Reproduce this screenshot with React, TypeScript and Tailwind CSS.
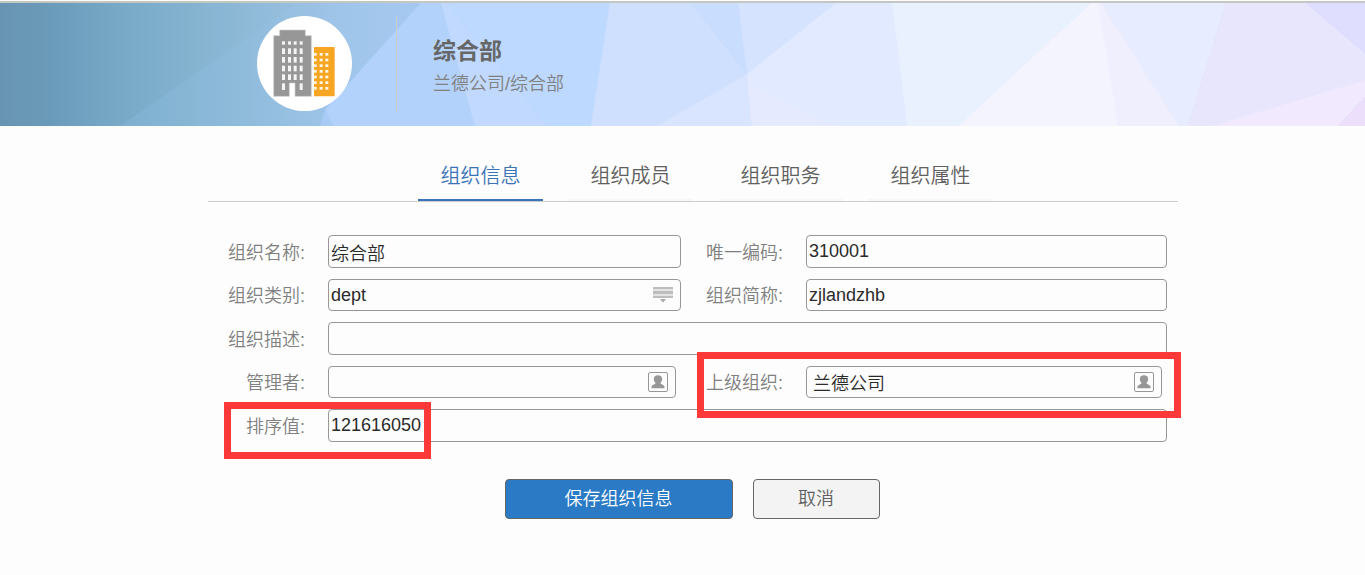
import React, { useState } from "react";

const FACETS: [string, string][] = [
  ["421,0 441,0 475,123 333,123 325,107 352,77", "#b2d2fb"],
  ["325,107 333,123 320,123", "#a8cbf5"],
  ["441,0 447,0 548,123 475,123", "#c1d9ff"],
  ["447,0 610,0 591,123 548,123", "#bdd9ff"],
  ["610,0 692,0 747,71 657,123 591,123", "#cfe0ff"],
  ["692,0 738,0 747,71", "#c9ddff"],
  ["738,0 836,0 747,71", "#d5e3ff"],
  ["657,123 747,71 752,123", "#d9e4fe"],
  ["747,71 836,0 892,0 907,123 752,123", "#e2eaff"],
  ["748,80 835,123 752,123", "#e6eafe"],
  ["892,0 1091,0 958,123 907,123", "#e9f1ff"],
  ["1091,0 1099,0 1117,112 1117,123 958,123", "#f4f4ff"],
  ["1098,0 1102,0 1180,123 1117,123 1117,112", "#f0effe"],
  ["1101,0 1226,0 1188,123 1179,123", "#e8ecff"],
  ["1226,0 1306,0 1365,50 1365,77 1212,123 1188,123", "#e8e6fd"],
  ["1306,0 1365,0 1365,50", "#e0defe"],
  ["1365,77 1365,94 1338,123 1212,123", "#f1eafe"],
  ["1365,94 1365,123 1338,123", "#ecdffb"],
];

function BannerBackdrop() {
  return (
    <svg
      className="absolute inset-0 h-full w-full"
      viewBox="0 0 1365 123"
      preserveAspectRatio="none"
      aria-hidden="true"
    >
      <defs>
        <linearGradient id="sea" gradientUnits="userSpaceOnUse" x1="0" y1="0" x2="430" y2="0">
          <stop offset="0" stopColor="#6794b2" />
          <stop offset="0.12" stopColor="#6b9bba" />
          <stop offset="0.3" stopColor="#79abc9" />
          <stop offset="0.45" stopColor="#84b3d0" />
          <stop offset="0.65" stopColor="#94bddc" />
          <stop offset="0.8" stopColor="#a0c5ea" />
          <stop offset="1" stopColor="#a6c9f1" />
        </linearGradient>
      </defs>
      <rect width="1365" height="123" fill="url(#sea)" />
      <polygon points="297,0 310,60 325,107 320,123 120,123" fill="#9cc8f0" fillOpacity="0.2" />
      {FACETS.map(([points, fill]) => (
        <polygon key={points} points={points} fill={fill} stroke={fill} strokeWidth="0.5" />
      ))}
    </svg>
  );
}

function BuildingLogo() {
  const greyCols = [96, 114, 131, 149];
  const greyRows = [121, 147, 173, 199];
  const orangeCols = [191, 209, 226];
  const orangeRows = [135, 152, 169, 186, 203, 220, 237];
  return (
    <svg className="h-full w-full" viewBox="21 24 285 285" aria-hidden="true">
      <path d="M71 83H89V66H166V83H184V265H135V225H118V265H71z" fill="#979797" stroke="#cfcfcf" strokeWidth="2" />
      {greyCols.map((x) => (
        <rect key={x} x={x} y="100" width="9" height="10" fill="#f4f4f4" />
      ))}
      {greyRows.map((y) =>
        greyCols.map((x) => <rect key={`${x}-${y}`} x={x} y={y} width="9" height="17" fill="#f4f4f4" />),
      )}
      <rect x="96" y="226" width="9" height="20" fill="#f4f4f4" />
      <rect x="149" y="226" width="9" height="20" fill="#f4f4f4" />
      <path d="M192 117H254V265H192z" fill="#f6a623" />
      {orangeRows.map((y) =>
        orangeCols.map((x) => <rect key={`${x}-${y}`} x={x} y={y} width="9" height="8" fill="#fff6e6" />),
      )}
    </svg>
  );
}

function PersonIcon() {
  return (
    <svg className="h-5 w-5" viewBox="0 0 20 20" aria-hidden="true">
      <rect x="0.5" y="0.5" width="19" height="19" rx="1.5" fill="#fdfdfd" stroke="#979797" />
      <path
        d="M10 3.200c2.500 0 4.200 1.600 4.200 3.900 0 1.800-.7 3-1.700 3.800v.6l3 1.700c.6.400 1 1 1 1.800v1.300H3.500V15c0-.8.4-1.400 1-1.800l3-1.700v-.6c-1-.8-1.700-2-1.700-3.800 0-2.300 1.700-3.900 4.200-3.900z"
        fill="#979797"
      />
    </svg>
  );
}

function MenuIcon() {
  return (
    <svg className="h-4 w-5" viewBox="0 0 20 16" aria-hidden="true">
      <path d="M0 0h20v11H0z" fill="#e4e4e4" />
      <path d="M0 0h20v2H0zM0 4h20v3H0zM0 9h20v2H0z" fill="#bdbdbd" />
      <path d="M7 12h6l-3 3.500z" fill="#a8a8a8" />
    </svg>
  );
}

const TABS = ["组织信息", "组织成员", "组织职务", "组织属性"];

const LABEL = "self-center whitespace-nowrap pt-[2px] text-right text-lg leading-6 text-[#808080]";
const FIELD =
  "block h-full w-full min-w-0 appearance-none rounded-[4px] border border-[#979797] bg-[#fdfdfd] px-[2px] text-lg leading-6 text-[#2b2b2b] outline-none";

function PersonField({ id, value, inset }: { id: string; value: string; inset: string }) {
  return (
    <div className="relative mr-[5px]">
      <input id={id} defaultValue={value} className={`${FIELD} ${inset}`} />
      <button type="button" aria-label="选择" className="absolute right-2 top-[6px] h-5 w-5">
        <PersonIcon />
      </button>
    </div>
  );
}

export default function App() {
  const [tab, setTab] = useState(0);
  return (
    <div className="min-h-screen bg-[#fdfdfd] pt-px font-['Liberation_Sans','Noto_Sans_CJK_SC',sans-serif] font-[350]">
      <header className="relative border-t-2 border-[#c4c6c2]">
        <BannerBackdrop />
        <div className="relative mx-auto flex h-[123px] max-w-[991px] items-start pl-[70px] pt-[13px]">
          <div className="h-[95px] w-[95px] shrink-0 overflow-hidden rounded-full bg-white">
            <BuildingLogo />
          </div>
          <div className="ml-11 h-[97px] w-px shrink-0 bg-[#c9cbcd]" />
          <div className="ml-9 pt-[18px]">
            <h1 className="text-[23px] font-bold leading-[34px] text-[#666]">综合部</h1>
            <p className="text-lg leading-8 text-[#808080]">兰德公司/综合部</p>
          </div>
        </div>
      </header>

      <main className="mx-auto max-w-[991px] pl-[21px]">
        <nav
          role="tablist"
          className="mt-[23px] flex gap-[25px] border-b border-[#ccc] pl-[210px]"
        >
          {TABS.map((name, i) => (
            <button
              key={name}
              type="button"
              role="tab"
              aria-selected={tab === i}
              onClick={() => setTab(i)}
              className={`h-[52px] w-[125px] border-b-2 pt-1 text-xl ${
                tab === i ? "border-[#3b73b9] text-[#3b73b9]" : "border-[#f7f7f7] text-[#606060]"
              }`}
            >
              {name}
            </button>
          ))}
        </nav>

        <form onSubmit={(e) => e.preventDefault()}>
          <div className="relative mt-[33px] grid grid-cols-[97px_353fr_79px_361fr] grid-rows-[33px_32px_33px_32px_33px] gap-x-[23px] gap-y-[11px] pr-[11px]">
            <label htmlFor="name" className={LABEL}>组织名称:</label>
            <input id="name" defaultValue="综合部" className={FIELD} />
            <label htmlFor="code" className={LABEL}>唯一编码:</label>
            <input id="code" defaultValue="310001" className={FIELD} />

            <label htmlFor="kind" className={LABEL}>组织类别:</label>
            <div className="relative">
              <select id="kind" defaultValue="dept" className={FIELD}>
                <option value="dept">dept</option>
              </select>
              <span className="pointer-events-none absolute right-2 top-2">
                <MenuIcon />
              </span>
            </div>
            <label htmlFor="short" className={LABEL}>组织简称:</label>
            <input id="short" defaultValue="zjlandzhb" className={FIELD} />

            <label htmlFor="about" className={LABEL}>组织描述:</label>
            <div className="col-span-3">
              <input id="about" className={FIELD} />
            </div>

            <label htmlFor="manager" className={LABEL}>管理者:</label>
            <PersonField id="manager" value="" inset="pr-8" />
            <label htmlFor="parent" className={LABEL}>上级组织:</label>
            <PersonField id="parent" value="兰德公司" inset="pl-[6px] pr-8" />

            <label htmlFor="order" className={LABEL}>排序值:</label>
            <div className="col-span-3">
              <input id="order" defaultValue="121616050" className={FIELD} />
            </div>

            <div className="pointer-events-none absolute -bottom-5 -left-[7px] -right-[14px] -top-[14px] col-start-3 col-end-5 row-start-4 row-end-5 border-[7px] border-[#fc3838]" />
            <div className="pointer-events-none absolute -bottom-[17px] -top-[7px] left-4 col-start-1 col-end-3 row-start-5 row-end-6 w-[207px] border-[7px] border-[#fc3838]" />
          </div>

          <div className="mt-[37px] flex justify-center gap-5 pr-[2px] text-lg">
            <button
              type="submit"
              className="h-10 w-[228px] rounded-[4px] border border-[#666] bg-[#2a7ac5] text-white"
            >
              保存组织信息
            </button>
            <button
              type="button"
              className="h-10 w-[127px] rounded-[4px] border border-[#666] bg-[#f3f3f3] text-[#606060]"
            >
              取消
            </button>
          </div>
        </form>
      </main>
    </div>
  );
}
